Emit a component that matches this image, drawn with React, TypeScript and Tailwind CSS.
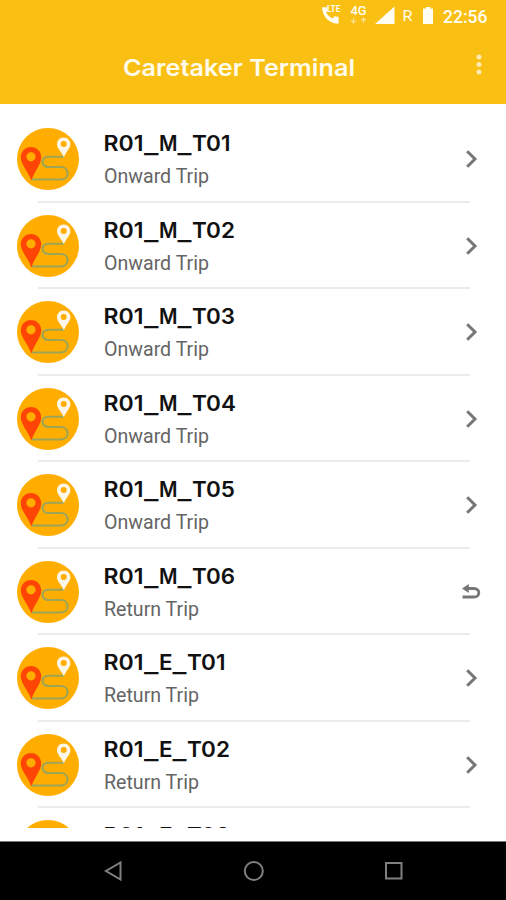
import React from "react";

type Trip = { code: string; kind?: string; tail: number; returning?: boolean };

const trips: Trip[] = [
  { code: "R01_M_T01", kind: "Onward Trip", tail: 38.5 },
  { code: "R01_M_T02", kind: "Onward Trip", tail: 43 },
  { code: "R01_M_T03", kind: "Onward Trip", tail: 43 },
  { code: "R01_M_T04", kind: "Onward Trip", tail: 44 },
  { code: "R01_M_T05", kind: "Onward Trip", tail: 43 },
  { code: "R01_M_T06", kind: "Return Trip", tail: 43, returning: true },
  { code: "R01_E_T01", kind: "Return Trip", tail: 38.5 },
  { code: "R01_E_T02", kind: "Return Trip", tail: 43 },
  { code: "R01_E_T03", tail: 43 },
];

// Stretches a line of text to an exact width, baseline at y.
function FitText({ text, width, height, y, className }: { text: string; width: number; height: number; y: number; className: string }) {
  return (
    <svg width={width + 4} height={height} className="block overflow-visible">
      <text x="0" y={y} textLength={width} lengthAdjust="spacingAndGlyphs" className={className}>
        {text}
      </text>
    </svg>
  );
}

// Trip code: each underscore-separated part keeps its own wide-set width.
function TripCode({ code, tail }: { code: string; tail: number }) {
  const [route, shift, number] = code.split("_");
  const middle = shift === "M" ? 18.5 : 13.5;
  return (
    <svg width="140" height="32" className="block overflow-visible">
      <text y="23.1" className="fill-[#111] font-['Inter'] text-[21.5px] font-semibold">
        <tspan x="-0.5" textLength="40" lengthAdjust="spacingAndGlyphs">{route}</tspan>
        <tspan x="40" y="25" textLength="14.5" lengthAdjust="spacingAndGlyphs">_</tspan>
        <tspan x="55" y="23.1" textLength={middle} lengthAdjust="spacingAndGlyphs">{shift}</tspan>
        <tspan x={55 + middle} y="25" textLength="14" lengthAdjust="spacingAndGlyphs">_</tspan>
        <tspan x={69.5 + middle} y="23.1" textLength={tail} lengthAdjust="spacingAndGlyphs">{number}</tspan>
      </text>
    </svg>
  );
}

function RouteIcon() {
  return (
    <svg width="62" height="62" viewBox="0 0 62 62" className="block shrink-0">
      <circle cx="31" cy="31" r="31" fill="#ffae00" />
      <path d="M47 28.7H31.5C23.5 28.7 23.5 39 31.5 39H43.5C53 39 53 51.5 43.5 51.5H14.5" fill="none" stroke="#9ca557" strokeWidth="2.1" />
      <path fillRule="evenodd" fill="#ff4505" d="M14 19C8.2 19 3.8 23.4 3.8 29.2C3.8 36.5 10.5 42 14.4 52.5C18 42 24.2 36.5 24.2 29.2C24.2 23.4 19.8 19 14 19ZM14 24.2A4.6 4.6 0 1 1 14 33.4A4.6 4.6 0 1 1 14 24.2Z" />
      <path fillRule="evenodd" fill="#fbf6e8" d="M46.7 9.5C42.8 9.5 40 12.3 40 16.3C40 20.8 44.5 23.5 46.9 29.5C49 23.5 53.4 20.8 53.4 16.3C53.4 12.3 50.6 9.5 46.7 9.5ZM46.7 13A3 3 0 1 1 46.7 19A3 3 0 1 1 46.7 13Z" />
    </svg>
  );
}

function Chevron() {
  return (
    <svg width="20" height="20" viewBox="0 0 20 20" className="block">
      <path d="M6.2 2.2L14 10L6.2 17.8" fill="none" stroke="#777" strokeWidth="3" />
    </svg>
  );
}

function ReturnArrow() {
  return (
    <svg width="20" height="20" viewBox="0 0 20 20" className="block">
      <path d="M5 6.5H13C19.4 6.5 19.4 15 13 15H1.5" fill="none" stroke="#777" strokeWidth="2.8" />
      <path d="M1 6.5L7.8 2V11Z" fill="#777" />
    </svg>
  );
}

function TripRow({ trip }: { trip: Trip }) {
  return (
    <li className="relative flex h-[86.5px] shrink-0 pl-[16.5px] pt-[12.3px]">
      <RouteIcon />
      <div className="ml-[25px] flex-1">
        <TripCode code={trip.code} tail={trip.tail} />
        {trip.kind && (
          <FitText text={trip.kind} width={trip.kind === "Onward Trip" ? 105 : 95} height={26} y={23.3} className="fill-[#646464] font-['Roboto'] text-[20px]" />
        )}
      </div>
      <div className="mr-[25px] mt-[21px]">{trip.returning ? <ReturnArrow /> : <Chevron />}</div>
      <div className="absolute bottom-0 left-[38px] right-[36px] h-[2px] bg-[#ebebeb]" />
    </li>
  );
}

export default function App() {
  return (
    <div className="flex h-[900px] w-[506px] flex-col overflow-hidden bg-white">
      <header className="h-[103.5px] shrink-0 bg-[#fabf13]">
        <div className="h-[32px]">
          <svg width="506" height="32" className="block" fill="#fffdf2">
            <g transform="translate(321.2 4.2) scale(.87)">
              <path d="M5.5 9C7 12.3 9.6 14.9 12.9 16.5L15.2 14.1C15.5 13.8 16 13.7 16.4 13.8C17.7 14.2 18.8 14.4 20 14.4V22.4C9.5 22.4 1 13.8 1 3.4H7C7 4.7 7.2 6 7.6 7C7.7 7.4 7.6 7.8 7.3 8.1Z" />
            </g>
            <text x="327" y="12.3" textLength="13.5" lengthAdjust="spacingAndGlyphs" className="font-['Roboto'] text-[8.5px] font-bold">LTE</text>
            <text x="350.5" y="15" textLength="16" lengthAdjust="spacingAndGlyphs" className="font-['Roboto'] text-[12px] font-medium">4G</text>
            <path d="M353.5 18V23M351.2 20.7L353.5 23L355.8 20.7M363.5 23V18M361.2 20.3L363.5 18L365.8 20.3" fill="none" stroke="#fde29a" strokeWidth="1.2" />
            <path d="M394.5 6.5V24H375Z" />
            <text x="402.5" y="21" textLength="10" lengthAdjust="spacingAndGlyphs" className="font-['Roboto'] text-[15.5px]">R</text>
            <path d="M426 7H430.5V8.6H433V24H423V8.6H426Z" />
            <text x="443" y="22.5" textLength="44.5" lengthAdjust="spacingAndGlyphs" className="font-['Roboto'] text-[18.5px] font-medium">22:56</text>
          </svg>
        </div>
        <div className="flex h-[70px] justify-between pl-[122.5px] pr-[24px]">
          <div className="pt-[15px]">
            <FitText text="Caretaker Terminal" width={232} height={40} y={28.5} className="fill-[#fffbea] font-['Inter'] text-[23.5px] font-semibold" />
          </div>
          <svg width="6" height="24" className="mt-[21px] block" fill="#fdebb5">
            <circle cx="3" cy="4" r="2.5" />
            <circle cx="3" cy="11.5" r="2.5" />
            <circle cx="3" cy="19" r="2.5" />
          </svg>
        </div>
      </header>
      <ul className="mt-[12.5px] flex h-[712.3px] shrink-0 flex-col overflow-hidden">
        {trips.map((trip) => (
          <TripRow key={trip.code} trip={trip} />
        ))}
      </ul>
      <div className="h-[13px] shrink-0" />
      <nav className="flex flex-1 justify-center border-t border-[#777] bg-black">
        <svg width="506" height="58" className="block" fill="none" stroke="#808080" strokeWidth="2">
          <path d="M120.5 20.5V37.5L106 29Z" />
          <circle cx="253.8" cy="29" r="9" />
          <rect x="386" y="21" width="15.5" height="15.5" />
        </svg>
      </nav>
    </div>
  );
}
